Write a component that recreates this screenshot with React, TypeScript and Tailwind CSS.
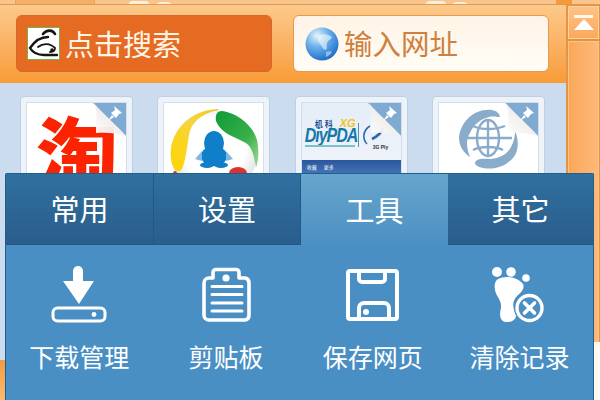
import type { JSX } from "react/jsx-runtime";

const cjk = "font-['Noto_Sans_CJK_SC','Liberation_Sans',sans-serif]";

function PinCorner(): JSX.Element {
  return (
    <svg className="absolute right-0 top-0" width="33" height="33" viewBox="0 0 33 33">
      <defs>
        <linearGradient id="fold" x1="0" y1="1" x2="1" y2="0">
          <stop offset="0" stopColor="#ffffff" />
          <stop offset="0.5" stopColor="#f0eeec" />
          <stop offset="1" stopColor="#a9a6a2" />
        </linearGradient>
      </defs>
      <path d="M0 0H33V33Z" fill="#7fabd3" />
      <path d="M1 0C3 6 4 10 3 18C3 24 3 28 3 30C12 29 24 30 33 33C28 27 24 24 18 18C12 12 5 6 1 0Z" fill="url(#fold)" fillOpacity="0.94" />
      <g fill="#ffffff">
        <path d="M21 3L29 10L26 11L23 15L18 10L22 7Z" />
        <path d="M19 12L21 14L15 18Z" />
      </g>
    </svg>
  );
}

function QQLogo(): JSX.Element {
  return (
    <svg width="101" height="73" viewBox="0 0 101 73" className="absolute left-0 top-0">
      <defs>
        <radialGradient id="ball" cx="0.5" cy="0.45" r="0.6">
          <stop offset="0.6" stopColor="#ffffff" />
          <stop offset="1" stopColor="#d8d8d8" />
        </radialGradient>
        <linearGradient id="green" x1="0" y1="0" x2="1" y2="1">
          <stop offset="0" stopColor="#0f9a3a" />
          <stop offset="0.6" stopColor="#38b04a" />
          <stop offset="1" stopColor="#a8dc9a" />
        </linearGradient>
        <linearGradient id="yellow" x1="0" y1="1" x2="1" y2="0">
          <stop offset="0" stopColor="#ffd400" />
          <stop offset="0.6" stopColor="#f5d63a" />
          <stop offset="1" stopColor="#eec82a" />
        </linearGradient>
      </defs>
      <circle cx="50" cy="50" r="43" fill="url(#ball)" />
      <path d="M7 56C4 30 25 7 54 6C56 7 52 8 50 8C36 12 27 20 25 32C23 44 22 56 18 66C14 72 8 66 7 56Z" fill="url(#yellow)" />
      <path d="M52 18C51 12 53 8 58 8C78 11 94 28 94 44C95 52 94 60 92 65C90 52 88 44 82 40C72 34 58 32 52 18Z" fill="url(#green)" />
      <ellipse cx="74" cy="70" rx="9" ry="6" fill="#e0322a" />
      <ellipse cx="11" cy="71" rx="2" ry="3" fill="#e0322a" />
      <g fill="#0e7fc8">
        <ellipse cx="50" cy="40" rx="10" ry="12" />
        <ellipse cx="50" cy="53" rx="13" ry="10" />
        <ellipse cx="43" cy="62" rx="7" ry="3" />
        <ellipse cx="57" cy="62" rx="7" ry="3" />
      </g>
      <path d="M38 48L31 56L38 58ZM62 48L69 56L62 58Z" fill="#7db8e0" />
    </svg>
  );
}

function GlobeLogo(): JSX.Element {
  return (
    <svg width="101" height="73" viewBox="0 0 101 73" className="absolute left-0 top-0">
      <g fill="#8aaccb">
        <path d="M53 7C36 5 22 18 20 34C20 44 25 50 31 54C27 44 27 36 31 30C35 21 42 16 50 14C54 13 58 14 61 14C60 10 58 8 53 7Z" />
        <path d="M76 28C80 36 80 48 74 55C66 64 54 67 44 65C38 64 34 61 37 58C40 55 46 56 52 56C60 55 68 52 72 44C75 38 76 33 76 28Z" />
      </g>
      <g fill="none" stroke="#8aaccb" strokeWidth="2.4">
        <path d="M28 35H73" />
        <path d="M49 18V52" />
        <ellipse cx="49" cy="35" rx="11" ry="18" />
        <path d="M34 23C42 27 56 27 66 23" />
        <path d="M34 47C42 43 56 43 64 47" />
      </g>
    </svg>
  );
}

function PdaLogo(): JSX.Element {
  return (
    <div className="absolute inset-0 flex flex-col bg-gradient-to-b from-[#e4edf8] to-[#f2f5fb]">
      <div className="relative h-[57px] shrink-0">
        <div className={`absolute left-[13px] top-[16px] text-[8px] leading-[10px] font-bold tracking-[2px] text-[#1f4f8f] ${cjk}`}>机科</div>
        <div className="absolute left-[38px] top-[15px] font-['Liberation_Sans',sans-serif] text-[11px] leading-[11px] font-bold italic text-[#f3c21c]">XG</div>
        <div className="absolute left-[3px] top-[24px] scale-y-125 origin-top font-['Liberation_Sans',sans-serif] text-[16px] leading-[14px] font-bold italic tracking-[-1px] text-[#1478a8]">DiyPDA</div>
        <div className="absolute left-[3px] top-[42px] h-[2px] w-[50px] bg-[#7cc0c8]" />
        <div className="absolute left-[56px] top-[20px] h-[24px] w-px bg-[#5b8fb8]" />
        <svg className="absolute left-[59px] top-[21px]" width="26" height="22" viewBox="0 0 26 22">
          <path d="M9 2C2 6 1 15 6 20" fill="none" stroke="#2a6aa8" strokeWidth="1.6" />
          <path d="M22 4C20 10 15 13 11 15" fill="none" stroke="#2a6aa8" strokeWidth="2.6" />
        </svg>
        <div className="absolute left-[71px] top-[41px] font-['Liberation_Sans',sans-serif] text-[5px] leading-[6px] font-bold text-[#333333]">3G Ply</div>
      </div>
      <div className={`flex h-[16px] shrink-0 items-start gap-[7px] bg-gradient-to-b from-[#2a56a0] to-[#4a78b8] pl-[5px] pt-[3px] text-[5px] leading-[7px] text-white ${cjk}`}>
        <span>收藏</span>
        <span>更多</span>
      </div>
    </div>
  );
}

function Tile({ children, pinned = true }: { children: JSX.Element; pinned?: boolean }): JSX.Element {
  return (
    <div className="h-[90px] w-[113px] shrink-0 rounded-[4px] border border-[#bcd0e6] bg-[#eef3fa] p-[5px]">
      <div className="relative h-full overflow-hidden border border-[#d5dfeb] bg-white">
        {children}
        {pinned && <PinCorner />}
      </div>
    </div>
  );
}

function SearchMark(): JSX.Element {
  return (
    <svg width="33" height="33" viewBox="0 0 33 33">
      <rect x="0.5" y="0.5" width="32" height="32" fill="#ffffff" stroke="#7cb24a" />
      <g fill="none" stroke="#151515" strokeLinecap="round">
        <path d="M16 7C20 2 26 3 28 7" strokeWidth="2.6" />
        <path d="M21 10C13 10 7 15 3 21C6 26 11 28 17 28H30" strokeWidth="2.4" />
        <path d="M11 20C16 16 23 16 28 21C28 24 26 25 23 25" strokeWidth="1.8" />
      </g>
      <circle cx="25" cy="23" r="1.8" fill="#151515" />
    </svg>
  );
}

function EarthMark(): JSX.Element {
  return (
    <svg width="34" height="34" viewBox="0 0 34 34">
      <defs>
        <radialGradient id="earth" cx="0.35" cy="0.25" r="0.85">
          <stop offset="0" stopColor="#e6f4fd" />
          <stop offset="0.4" stopColor="#6fb2ea" />
          <stop offset="0.8" stopColor="#2f7fd2" />
          <stop offset="1" stopColor="#1b5fb0" />
        </radialGradient>
      </defs>
      <circle cx="17" cy="17" r="16.5" fill="url(#earth)" />
      <path d="M14 9C18 6 24 7 27 10C26 13 23 13 22 16C21 19 23 20 21 23C18 23 17 19 15 17C13 15 12 11 14 9Z" fill="#ffffff" fillOpacity="0.55" />
      <path d="M21 25C23 24 26 24 27 25C25 28 23 29 21 30Z" fill="#ffffff" fillOpacity="0.45" />
    </svg>
  );
}

function DownloadIcon(): JSX.Element {
  return (
    <svg width="64" height="64" viewBox="48 262 64 64" fill="#ffffff">
      <path d="M74 270a5 5 0 0 1 10 0V280H95L80 303L64 280H74Z" />
      <rect x="54" y="307" width="52" height="13" rx="4.5" fill="none" stroke="#ffffff" strokeWidth="3" />
      <circle cx="95" cy="313.5" r="2.4" />
    </svg>
  );
}

function ClipboardIcon(): JSX.Element {
  return (
    <svg width="64" height="64" viewBox="195 262 64 64" fill="none" stroke="#ffffff">
      <path d="M214 277V271.5A3 3 0 0 1 217 268.5H237A3 3 0 0 1 240 271.5V277H246A5 5 0 0 1 250 282V314A5 5 0 0 1 246 319H210A5 5 0 0 1 205 314V282A5 5 0 0 1 210 277Z" strokeWidth="3.6" strokeLinejoin="round" />
      <circle cx="227" cy="277" r="3.6" fill="#ffffff" stroke="none" />
      <path d="M213 285.5H243M213 293.5H243M213 302H243M213 310H243" strokeWidth="3" strokeLinecap="round" />
    </svg>
  );
}

function SaveIcon(): JSX.Element {
  return (
    <svg width="64" height="64" viewBox="341 262 64 64" fill="none" stroke="#ffffff" strokeWidth="4">
      <rect x="348" y="270" width="49" height="48" rx="2" />
      <path d="M359 271V278A3 3 0 0 0 362 281H382A3 3 0 0 0 385 278V271" />
      <path d="M359 317V307A5 5 0 0 1 364 302H384A5 5 0 0 1 389 307V317" />
      <circle cx="366" cy="311" r="3" fill="#ffffff" stroke="none" />
    </svg>
  );
}

function ClearIcon(): JSX.Element {
  return (
    <svg width="64" height="64" viewBox="488 262 64 64" fill="#ffffff">
      <circle cx="497" cy="271" r="5" />
      <circle cx="511" cy="271" r="4.8" />
      <circle cx="526" cy="277" r="3.8" />
      <path d="M498 278C505 274 518 276 523 283C525 287 522 291 517 295C513 299 512 305 515 311C518 316 514 321 507 321C500 321 499 314 501 307C502 298 495 295 495 288C494 284 495 280 498 278Z" />
      <circle cx="529.5" cy="307" r="15.5" fill="#4a8fc4" />
      <circle cx="529.5" cy="307" r="12.5" fill="none" stroke="#ffffff" strokeWidth="3.4" />
      <path d="M524.5 302L534.5 312M534.5 302L524.5 312" stroke="#ffffff" strokeWidth="3.6" strokeLinecap="round" />
    </svg>
  );
}

const tabs = [
  { label: "常用", active: false },
  { label: "设置", active: false },
  { label: "工具", active: true },
  { label: "其它", active: false },
];

const tools = [
  { label: "下载管理", icon: <DownloadIcon /> },
  { label: "剪贴板", icon: <ClipboardIcon /> },
  { label: "保存网页", icon: <SaveIcon /> },
  { label: "清除记录", icon: <ClearIcon /> },
];

export default function App(): JSX.Element {
  return (
    <div className={`relative flex h-[400px] w-[600px] flex-col overflow-hidden bg-[#cbdcee] ${cjk}`}>
      {/* Wallpaper strip above the window */}
      <div className="relative h-[5px] shrink-0 overflow-hidden border-b border-[#e09a55] bg-[#f9c58c]">
        <div className="absolute left-[15px] top-0 h-full w-[80px] border-x border-[#e6a261] bg-[#f4b067]" />
        <div className="absolute left-[128px] top-[1px] h-[10px] w-[22px] rounded-full bg-[#fff0dc]" />
        <div className="absolute left-[156px] top-[2px] h-[10px] w-[16px] rounded-full bg-[#fff0dc]" />
        <div className="absolute left-[425px] top-[1px] h-[10px] w-[22px] rounded-full bg-[#fff0dc]" />
        <div className="absolute left-[452px] top-[2px] h-[10px] w-[16px] rounded-full bg-[#fff0dc]" />
        <div className="absolute left-[556px] top-0 h-full w-[16px] bg-[#f7993a]" />
      </div>

      <div className="flex min-h-0 flex-1">
        <div className="flex w-[566px] shrink-0 flex-col">
          {/* Search and address bar */}
          <div className="flex h-[78px] shrink-0 gap-[21px] bg-gradient-to-b from-[#fcc98a] to-[#f89b34] pl-[16px] pt-[10px]">
            <div className="flex h-[57px] w-[256px] items-center rounded-[6px] border border-[#d6682a] bg-[#e56a22] pl-[10px]">
              <SearchMark />
              <span className="ml-[5px] text-[29px] leading-none text-[#fff4e6]">点击搜索</span>
            </div>
            <div className="flex h-[57px] w-[256px] items-center rounded-[6px] border border-[#e49a50] bg-gradient-to-b from-[#fff3e6] to-[#fffdf6] pl-[11px]">
              <EarthMark />
              <span className="ml-[5px] text-[28.5px] leading-none text-[#cf7f3e]">输入网址</span>
            </div>
          </div>

          {/* Shortcut tiles, mostly covered by the tool panel */}
          <div className="flex gap-[24.33px] pl-[20px] pt-[13px]">
            <Tile>
              <div className={`absolute left-[9px] top-[2px] text-[82px] leading-[92px] font-black text-[#fb2300] ${cjk}`}>淘</div>
            </Tile>
            <Tile pinned={false}>
              <QQLogo />
            </Tile>
            <Tile>
              <PdaLogo />
            </Tile>
            <Tile>
              <GlobeLogo />
            </Tile>
          </div>
        </div>

        {/* Scrollbar */}
        <div className="flex w-[34px] flex-col gap-[2px] border-l border-[#e4974a] bg-[#e2933f] px-[1px] pt-[1px]">
          <div className="flex h-[33px] shrink-0 flex-col items-center border border-[#fcd3a3] bg-gradient-to-b from-[#ffc284] to-[#fba95c] pt-[8px]">
            <div className="h-[3px] w-[19px] bg-[#fff7ea]" />
            <div className="mt-[1px] h-0 w-0 border-x-[10px] border-b-[11px] border-x-transparent border-b-white" />
          </div>
          <div className="flex-1 border border-[#fcc48a] bg-gradient-to-r from-[#fba85a] to-[#fdb878]" />
        </div>
      </div>

      {/* Edges showing next to the panel */}
      <div className="absolute bottom-0 left-0 h-[40px] w-[5px] bg-gradient-to-b from-[#f59a3c] to-[#fdbb6e]" />
      <div className="absolute bottom-0 right-0 h-[58px] w-[6px] bg-[#fff9ef]" />

      {/* Tool panel */}
      <div className="absolute bottom-0 left-[5px] top-[173px] flex w-[589px] flex-col rounded-t-[2px] border-x border-t border-[#1f5f8f] bg-[#4a8fc4]">
        <div className="grid h-[71px] shrink-0 grid-cols-[148px_147px_147px_145px]">
          {tabs.map((tab) => (
            <div
              key={tab.label}
              className={
                tab.active
                  ? "flex items-center justify-center bg-gradient-to-b from-[#66a5cc] to-[#4c8fc3] text-[29px] text-white"
                  : "flex items-center justify-center border-b border-r border-[#1d5a8a] bg-gradient-to-b from-[#2f709f] to-[#2a5d8c] text-[29px] text-white last:border-r-0"
              }
            >
              {tab.label}
            </div>
          ))}
        </div>
        <div className="grid grid-cols-4 pt-[18px]">
          {tools.map((tool) => (
            <div key={tool.label} className="flex flex-col items-center">
              {tool.icon}
              <span className="mt-[14px] text-[25px] leading-[30px] text-white">{tool.label}</span>
            </div>
          ))}
        </div>
      </div>
    </div>
  );
}
